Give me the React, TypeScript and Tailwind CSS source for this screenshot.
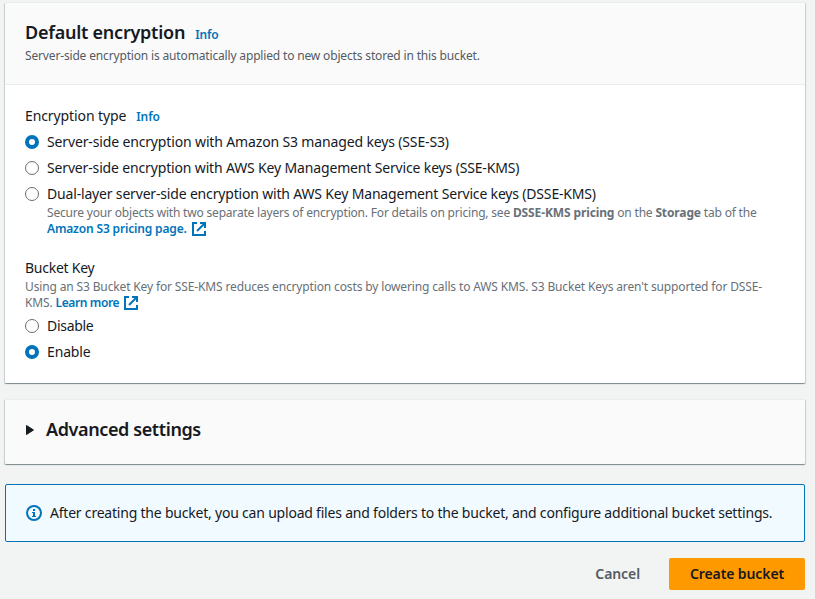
import type { ReactNode } from "react";

function ExternalIcon() {
  return (
    <svg className="ml-1 inline-block h-4 w-4 align-[-4px]" viewBox="0 0 16 16" fill="none" stroke="#0073bb" strokeWidth="2">
      <path d="M6 2H2v12h12v-4" />
      <path d="M9 2h5v5" />
      <path d="M14 2 6 10" />
    </svg>
  );
}

function Radio({ checked, children }: { checked?: boolean; children: ReactNode }) {
  return (
    <div className="flex h-[22px] items-center gap-2">
      <span
        className={
          checked
            ? "h-3.5 w-3.5 rounded-full border-[4.5px] border-[#0073bb] bg-white"
            : "h-3.5 w-3.5 rounded-full border border-[#687078] bg-white"
        }
      />
      <span>{children}</span>
    </div>
  );
}

const card =
  "rounded-[1px] border-t border-[#eaeded] shadow-[0_1px_1px_0_rgba(0,28,36,0.3),1px_1px_1px_0_rgba(0,28,36,0.15),-1px_1px_1px_0_rgba(0,28,36,0.15)]";

export default function App() {
  return (
    <div className="h-[599px] w-[815px] overflow-hidden whitespace-nowrap bg-[#f2f3f3] pt-0.5 pr-2.5 pl-[5px] font-['Noto_Sans',sans-serif] text-sm leading-[22px] tracking-[-0.145px] text-[#16191f]">
      <section className={`h-[381px] bg-white ${card}`}>
        <header className="h-[82px] border-b border-[#eaeded] bg-[#fafafa] px-5 pt-[18px]">
          <div className="flex h-[22px] items-baseline gap-2.5">
            <h2 className="text-lg leading-[22px] font-semibold tracking-[-0.24px]">Default encryption</h2>
            <a className="text-xs font-semibold text-[#0073bb]">Info</a>
          </div>
          <p className="pt-1 text-xs leading-[18px] tracking-[-0.16px] text-[#545b64]">
            Server-side encryption is automatically applied to new objects stored in this bucket.
          </p>
        </header>
        <div className="px-5 pt-5">
          <div className="flex h-[22px] items-baseline gap-2.5">
            <span className="tracking-[-0.1px]">Encryption type</span>
            <a className="text-xs font-semibold text-[#0073bb]">Info</a>
          </div>
          <div className="flex flex-col gap-1 pt-1">
            <Radio checked>Server-side encryption with Amazon S3 managed keys (SSE-S3)</Radio>
            <Radio><span className="tracking-[-0.155px]">Server-side encryption with AWS Key Management Service keys (SSE-KMS)</span></Radio>
            <Radio><span className="tracking-[-0.175px]">Dual-layer server-side encryption with AWS Key Management Service keys (DSSE-KMS)</span></Radio>
          </div>
          <p className="pl-[22px] text-xs leading-4 tracking-[-0.19px] text-[#687078]">
            Secure your objects with two separate layers of encryption. For details on pricing, see{" "}
            <b className="tracking-[-0.12px]">DSSE-KMS pricing</b> on the <b className="tracking-[-0.12px]">Storage</b> tab of the
            <br />
            <a className="font-semibold tracking-[-0.16px] text-[#0073bb]">Amazon S3 pricing page.</a>
            <ExternalIcon />
          </p>
          <div className="mt-5 tracking-[-0.25px]">Bucket Key</div>
          <p className="text-xs leading-4 tracking-[-0.14px] text-[#687078]">
            Using an S3 Bucket Key for SSE-KMS reduces encryption costs by lowering calls to AWS KMS. S3 Bucket Keys aren't supported for DSSE-
            <br />
            KMS. <a className="font-semibold tracking-[-0.38px] text-[#0073bb]">Learn more</a>
            <ExternalIcon />
          </p>
          <div className="flex flex-col gap-1 pt-1">
            <Radio><span className="tracking-[-0.3px]">Disable</span></Radio>
            <Radio checked>Enable</Radio>
          </div>
        </div>
      </section>
      <section className={`mt-4 flex h-[65px] items-center bg-[#fafafa] pb-[5px] pl-5 ${card}`}>
        <svg className="h-3 w-[9px]" viewBox="0 0 9 12">
          <path d="M1.5 1.5v9l7-4.5z" fill="#16191f" stroke="#16191f" strokeLinejoin="round" />
        </svg>
        <h2 className="-mt-px pl-3 text-lg font-semibold tracking-[-0.39px]">Advanced settings</h2>
      </section>
      <div className="mt-5 flex h-[58px] items-center gap-2 rounded-xs border border-[#0073bb] bg-[#f1faff] pl-5">
        <svg className="h-4 w-4" viewBox="0 0 16 16" fill="none" stroke="#0073bb" strokeWidth="2">
          <circle cx="8" cy="8" r="7" />
          <path d="M7 4h2v2H7zM6 7h3v4h1v1H6v-1h1V8H6z" fill="#0073bb" stroke="none" />
        </svg>
        <span className="tracking-[-0.21px]">After creating the bucket, you can upload files and folders to the bucket, and configure additional bucket settings.</span>
      </div>
      <div className="mt-4 flex h-8 items-center justify-end gap-[29px] font-semibold tracking-[-0.1px]">
        <button className="text-[#545b64]">Cancel</button>
        <button className="h-8 w-[136px] rounded-xs bg-[#ff9900]">Create bucket</button>
      </div>
    </div>
  );
}
